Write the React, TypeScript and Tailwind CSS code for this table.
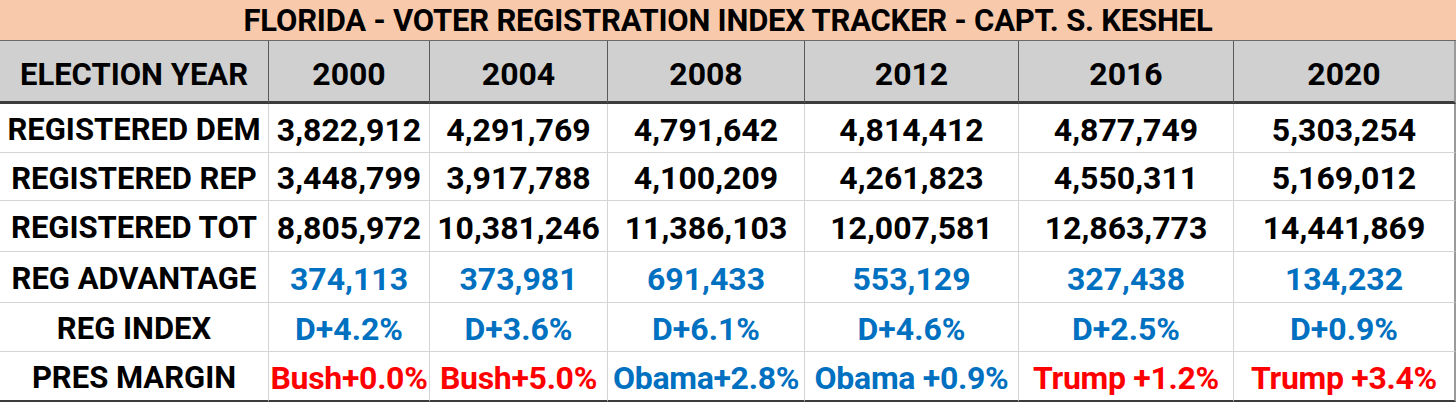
import React from "react";

const cols = ["2000", "2004", "2008", "2012", "2016", "2020"];

type Row = { label: string; values: string[]; color: string };

const rows: Row[] = [
  { label: "REGISTERED DEM", values: ["3,822,912", "4,291,769", "4,791,642", "4,814,412", "4,877,749", "5,303,254"], color: "text-black" },
  { label: "REGISTERED REP", values: ["3,448,799", "3,917,788", "4,100,209", "4,261,823", "4,550,311", "5,169,012"], color: "text-black" },
  { label: "REGISTERED TOT", values: ["8,805,972", "10,381,246", "11,386,103", "12,007,581", "12,863,773", "14,441,869"], color: "text-black" },
  { label: "REG ADVANTAGE", values: ["374,113", "373,981", "691,433", "553,129", "327,438", "134,232"], color: "text-[#0070c0]" },
  { label: "REG INDEX", values: ["D+4.2%", "D+3.6%", "D+6.1%", "D+4.6%", "D+2.5%", "D+0.9%"], color: "text-[#0070c0]" },
];

const pres = [
  { t: "Bush+0.0%", c: "text-[#ff0000]" },
  { t: "Bush+5.0%", c: "text-[#ff0000]" },
  { t: "Obama+2.8%", c: "text-[#0070c0]" },
  { t: "Obama +0.9%", c: "text-[#0070c0]" },
  { t: "Trump +1.2%", c: "text-[#ff0000]" },
  { t: "Trump +3.4%", c: "text-[#ff0000]" },
];

const heights = ["h-[49px]", "h-[48px]", "h-[51px]", "h-[51px]", "h-[49px]"];

export default function App() {
  return (
    <div
      className="w-[1456px] h-[402px] bg-white overflow-hidden text-black"
      style={{ fontFamily: "Roboto, 'Liberation Sans', sans-serif" }}
    >
      <div className="h-[41px] bg-[#f8caab] border-b border-[#6a6a6a] flex items-center justify-center text-[31px] font-bold tracking-[-0.2px] leading-none pt-[1px]">
        FLORIDA - VOTER REGISTRATION INDEX TRACKER - CAPT. S. KESHEL
      </div>
      <div className="grid grid-cols-[269px_161px_178px_197px_214px_215px_222px]">
        <div className="h-[63px] bg-[#d0d0d0] border-b-[3px] border-b-[#3c3c3c] border-r border-r-[#5a5a5a] flex items-center justify-center text-[31px] font-bold leading-none pt-[6px]">
          ELECTION YEAR
        </div>
        {cols.map((c, i) => (
          <div
            key={c}
            className={
              "h-[63px] bg-[#d0d0d0] border-b-[3px] border-b-[#3c3c3c] flex items-center justify-center text-[32px] font-bold leading-none pt-[6px] " +
              (i === 5 ? "border-r-2 border-r-[#9a9a9a]" : "border-r border-r-[#5a5a5a]")
            }
          >
            {c}
          </div>
        ))}
        {rows.map((r, ri) => (
          <React.Fragment key={r.label}>
            <div className={heights[ri] + " border-b border-r border-[#d4d4d4] flex items-center justify-center text-[31px] font-bold leading-none pt-[3px]"}>
              {r.label}
            </div>
            {r.values.map((v, i) => (
              <div
                key={i}
                className={
                  heights[ri] +
                  " border-b border-b-[#d4d4d4] flex items-center justify-center text-[32px] font-bold leading-none pt-[3px] " +
                  r.color +
                  (i === 5 ? " border-r-2 border-r-[#9a9a9a]" : " border-r border-r-[#d4d4d4]")
                }
              >
                {v}
              </div>
            ))}
          </React.Fragment>
        ))}
        <div className="h-[50px] border-b-2 border-b-[#3c3c3c] border-r border-r-[#d4d4d4] flex items-center justify-center text-[31px] font-bold leading-none pt-[3px]">
          PRES MARGIN
        </div>
        {pres.map((p, i) => (
          <div
            key={i}
            className={
              "h-[50px] border-b-2 border-b-[#3c3c3c] flex items-center justify-center text-[32px] font-bold leading-none whitespace-nowrap tracking-[-0.3px] pt-[3px] " +
              p.c +
              (i === 5 ? " border-r-2 border-r-[#9a9a9a]" : " border-r border-r-[#d4d4d4]")
            }
          >
            {p.t}
          </div>
        ))}
      </div>
    </div>
  );
}
